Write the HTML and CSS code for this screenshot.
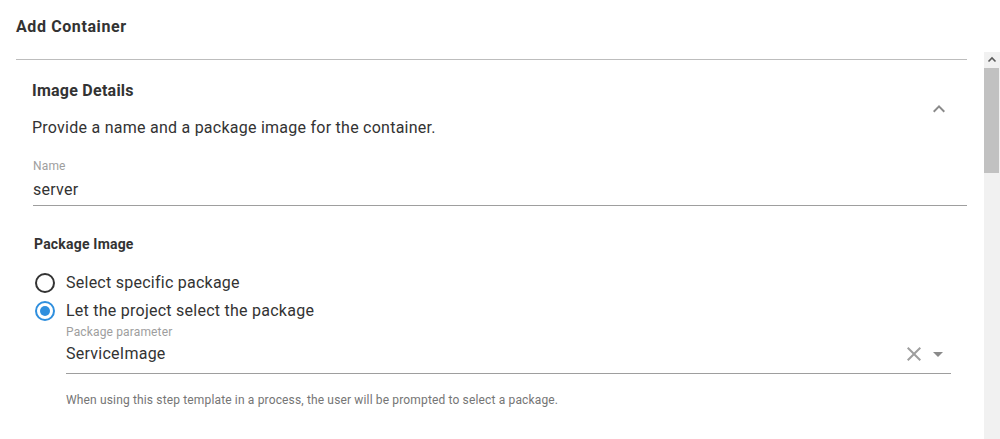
FILE: index.html
```html
<!DOCTYPE html>
<html>
<head>
<meta charset="utf-8">
<link rel="stylesheet" href="styles.css">
</head>
<body>
<header class="page-title">Add Container</header>
<div class="scroll-area">
  <main class="content">
    <section class="card">
      <div class="card-head">
        <div class="card-head-text">
          <h2 class="card-title">Image Details</h2>
          <p class="card-desc">Provide a name and a package image for the container.</p>
        </div>
        <svg class="chevron" viewBox="0 0 24 24" width="24" height="24"><path d="M12 8l-6 6 1.41 1.41L12 10.83l4.59 4.58L18 14z"/></svg>
      </div>
      <div class="card-body">
        <div class="field">
          <label class="field-label">Name</label>
          <div class="field-input name-input">server</div>
        </div>
        <h3 class="sub-title">Package Image</h3>
        <div class="radio-group">
          <div class="radio-row">
            <span class="radio"></span>
            <span class="radio-label">Select specific package</span>
          </div>
          <div class="radio-row">
            <span class="radio checked"><span class="radio-dot"></span></span>
            <span class="radio-label">Let the project select the package</span>
          </div>
          <div class="nested">
            <div class="field nested-field">
              <label class="field-label small">Package parameter</label>
              <div class="field-input select">
                <span class="select-value">ServiceImage</span>
                <svg class="icon-clear" viewBox="0 0 24 24" width="24" height="24"><path d="M19 6.41L17.59 5 12 10.59 6.41 5 5 6.41 10.59 12 5 17.59 6.41 19 12 13.41 17.59 19 19 17.59 13.41 12z"/></svg>
                <svg class="icon-drop" viewBox="0 0 24 24" width="24" height="24"><path d="M7 10l5 5 5-5z"/></svg>
              </div>
            </div>
            <p class="help">When using this step template in a process, the user will be prompted to select a package.</p>
          </div>
        </div>
      </div>
    </section>
  </main>
  <div class="scrollbar">
    <div class="sb-button"><svg viewBox="0 0 16 16" width="16" height="16"><path d="M4.5 9.5L8 6l3.5 3.5" fill="none" stroke="#5a5a5a" stroke-width="1.6"/></svg></div>
    <div class="sb-thumb"></div>
    <div class="sb-track"></div>
  </div>
</div>
</body>
</html>
```
FILE: styles.css
```css
* { box-sizing: border-box; }
html, body {
  margin: 0;
  padding: 0;
  height: 439px;
  overflow: hidden;
  background: #fff;
}
body {
  font-family: Roboto, "Noto Sans", "Liberation Sans", sans-serif;
  color: #333;
}
.page-title {
  height: 52px;
  line-height: 52px;
  padding: 1px 0 0 16px;
  font-size: 16px;
  font-weight: 700;
  letter-spacing: 0.6px;
  color: #333;
}
.scroll-area {
  display: flex;
  height: 387px;
}
.content {
  flex: 1;
  overflow: hidden;
  padding: 7px 17px 0 16px;
}
.card {
  border-top: 1px solid #bdbdbd;
}
.card-head {
  display: flex;
  align-items: center;
  padding: 19px 16px 0 16px;
}
.card-head-text { flex: 1; }
.card-title {
  margin: 0 0 13px 0;
  font-size: 16px;
  line-height: 24px;
  font-weight: 700;
  letter-spacing: 0.25px;
  color: #333;
}
.card-desc {
  margin: 0;
  font-size: 16px;
  line-height: 24px;
  letter-spacing: 0.25px;
  color: #333;
}
.chevron {
  fill: #8a8a8a;
  flex: none;
  margin-top: -1px;
}
.card-body {
  padding: 18px 0 0 17px;
}
.field-label {
  display: block;
  font-size: 12px;
  line-height: 16px;
  letter-spacing: 0.15px;
  color: #9e9e9e;
}
.field-label.small { line-height: 14px; }
.field-input {
  margin-top: 4px;
  font-size: 16px;
  line-height: 24px;
  letter-spacing: 0.25px;
  padding-bottom: 3px;
  border-bottom: 1px solid #9e9e9e;
  color: #333;
}
.sub-title {
  margin: 28px 0 0 1px;
  font-size: 14px;
  line-height: 20px;
  font-weight: 700;
  letter-spacing: 0.2px;
  color: #333;
}
.radio-group {
  margin-top: 15px;
  padding-right: 16px;
}
.radio-row {
  display: flex;
  align-items: center;
  height: 28px;
}
.radio {
  width: 20px;
  height: 20px;
  margin-left: 2px;
  margin-right: 11px;
  border: 2px solid #333;
  border-radius: 50%;
  display: flex;
  align-items: center;
  justify-content: center;
  flex: none;
}
.radio.checked { border-color: #2f8fde; }
.radio-dot {
  width: 10px;
  height: 10px;
  border-radius: 50%;
  background: #2f8fde;
}
.radio-label {
  font-size: 16px;
  line-height: 24px;
  letter-spacing: 0.25px;
  color: #333;
}
.nested {
  padding-left: 33px;
}
.select {
  display: flex;
  align-items: center;
  margin-top: 3px;
  padding-bottom: 7px;
}
.select-value { flex: 1; }
.icon-clear { fill: #9e9e9e; flex: none; }
.icon-drop { fill: #8a8a8a; flex: none; margin-right: 1px; }
.help {
  margin: 18px 0 0 0;
  font-size: 12px;
  line-height: 16px;
  letter-spacing: 0.15px;
  color: #757575;
}
.scrollbar {
  width: 16px;
  flex: none;
  display: flex;
  flex-direction: column;
  background: #f1f1f1;
}
.sb-button {
  height: 16px;
  flex: none;
}
.sb-button svg { display: block; }
.sb-thumb {
  height: 105px;
  flex: none;
  margin: 0 1px 0 0;
  background: #c1c1c1;
}
.sb-track { flex: 1; }
```
